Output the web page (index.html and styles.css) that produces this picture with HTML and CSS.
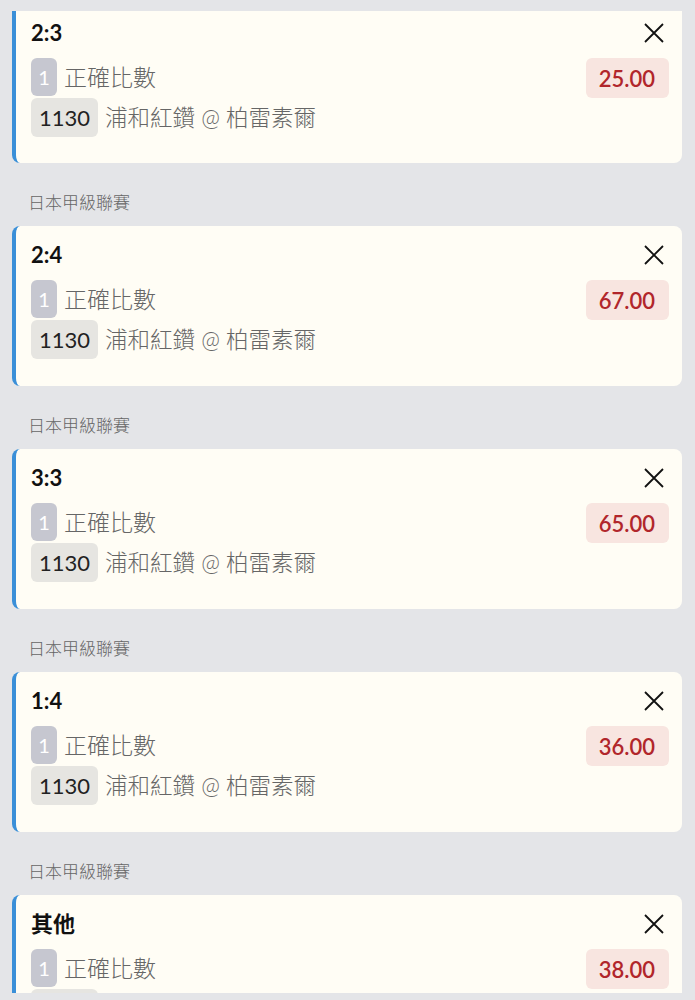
FILE: index.html
```html
<!DOCTYPE html>
<html lang="zh-Hant">
<head>
<meta charset="utf-8">
<title>投注單</title>
<link rel="stylesheet" href="styles.css">
</head>
<body>
<div class="viewport">
  <div class="list">
    <div class="card card--clipped">
      <div class="title-row">
        <div class="title">2:3</div>
        <button class="close" aria-label="close"><svg viewBox="0 0 20 20" width="20" height="20"><path d="M1 1L19 19M19 1L1 19" stroke="#111" stroke-width="1.8" fill="none"/></svg></button>
      </div>
      <div class="row">
        <div class="left"><span class="leg">1</span><span class="txt">正確比數</span></div>
        <span class="odds">25.00</span>
      </div>
      <div class="row2"><span class="code">1130</span><span class="txt">浦和紅鑽 @ 柏雷素爾</span></div>
    </div>

    <div class="league">日本甲級聯賽</div>
    <div class="card">
      <div class="title-row">
        <div class="title">2:4</div>
        <button class="close" aria-label="close"><svg viewBox="0 0 20 20" width="20" height="20"><path d="M1 1L19 19M19 1L1 19" stroke="#111" stroke-width="1.8" fill="none"/></svg></button>
      </div>
      <div class="row">
        <div class="left"><span class="leg">1</span><span class="txt">正確比數</span></div>
        <span class="odds">67.00</span>
      </div>
      <div class="row2"><span class="code">1130</span><span class="txt">浦和紅鑽 @ 柏雷素爾</span></div>
    </div>

    <div class="league">日本甲級聯賽</div>
    <div class="card">
      <div class="title-row">
        <div class="title">3:3</div>
        <button class="close" aria-label="close"><svg viewBox="0 0 20 20" width="20" height="20"><path d="M1 1L19 19M19 1L1 19" stroke="#111" stroke-width="1.8" fill="none"/></svg></button>
      </div>
      <div class="row">
        <div class="left"><span class="leg">1</span><span class="txt">正確比數</span></div>
        <span class="odds">65.00</span>
      </div>
      <div class="row2"><span class="code">1130</span><span class="txt">浦和紅鑽 @ 柏雷素爾</span></div>
    </div>

    <div class="league">日本甲級聯賽</div>
    <div class="card">
      <div class="title-row">
        <div class="title">1:4</div>
        <button class="close" aria-label="close"><svg viewBox="0 0 20 20" width="20" height="20"><path d="M1 1L19 19M19 1L1 19" stroke="#111" stroke-width="1.8" fill="none"/></svg></button>
      </div>
      <div class="row">
        <div class="left"><span class="leg">1</span><span class="txt">正確比數</span></div>
        <span class="odds">36.00</span>
      </div>
      <div class="row2"><span class="code">1130</span><span class="txt">浦和紅鑽 @ 柏雷素爾</span></div>
    </div>

    <div class="league">日本甲級聯賽</div>
    <div class="card">
      <div class="title-row">
        <div class="title">其他</div>
        <button class="close" aria-label="close"><svg viewBox="0 0 20 20" width="20" height="20"><path d="M1 1L19 19M19 1L1 19" stroke="#111" stroke-width="1.8" fill="none"/></svg></button>
      </div>
      <div class="row">
        <div class="left"><span class="leg">1</span><span class="txt">正確比數</span></div>
        <span class="odds">38.00</span>
      </div>
      <div class="row2"><span class="code">1130</span><span class="txt">浦和紅鑽 @ 柏雷素爾</span></div>
    </div>
  </div>
</div>
</body>
</html>
```

FILE: styles.css
```css
html, body {
  margin: 0;
  padding: 0;
  background: #e4e5e8;
}
body {
  font-family: Lato, "Noto Sans CJK TC", sans-serif;
}
.viewport {
  padding-top: 11px;
  height: 982px;
  overflow: hidden;
}
.list {
  padding: 0 13px 0 12px;
}
.card {
  background: #fffdf5;
  border-left: 4px solid #3a8fd8;
  border-radius: 8px;
  padding: 10px 13px 27px 15px;
}
.card--clipped {
  border-top-left-radius: 0;
  border-top-right-radius: 0;
  padding-top: 3px;
  padding-bottom: 26px;
}
.title-row {
  height: 38px;
  display: flex;
  align-items: center;
  justify-content: space-between;
  margin-bottom: 6px;
}
.title {
  font-size: 22px;
  font-weight: 700;
  color: #111;
  line-height: 38px;
}
.close {
  width: 30px;
  height: 30px;
  padding: 0;
  border: 0;
  background: transparent;
  display: flex;
  align-items: center;
  justify-content: center;
}
.row {
  height: 40px;
  display: flex;
  justify-content: space-between;
  align-items: flex-start;
}
.left {
  display: flex;
  align-items: center;
  height: 38px;
}
.leg {
  width: 26px;
  height: 38px;
  border-radius: 6px;
  background: #c6c7d0;
  color: #fff;
  font-size: 20px;
  display: flex;
  align-items: center;
  justify-content: center;
}
.txt {
  margin-left: 7px;
  font-size: 23px;
  font-weight: 300;
  color: #666;
  line-height: 38px;
}
.row2 .txt {
  font-size: 22.5px;
}
.odds {
  height: 40px;
  padding: 0 14px 0 13px;
  border-radius: 6px;
  background: #f8e5e0;
  color: #b1262b;
  font-size: 22px;
  font-weight: 600;
  display: flex;
  align-items: center;
}
.row2 {
  height: 39px;
  display: flex;
  align-items: center;
}
.code {
  height: 39px;
  padding: 0 8px;
  border-radius: 6px;
  background: #e6e5e1;
  color: #222;
  font-size: 22px;
  display: flex;
  align-items: center;
}
.league {
  padding: 28px 0 13px 16px;
  line-height: 22px;
  font-size: 17px;
  font-weight: 300;
  color: #666;
  font-family: "Noto Sans CJK TC", sans-serif;
}
```
